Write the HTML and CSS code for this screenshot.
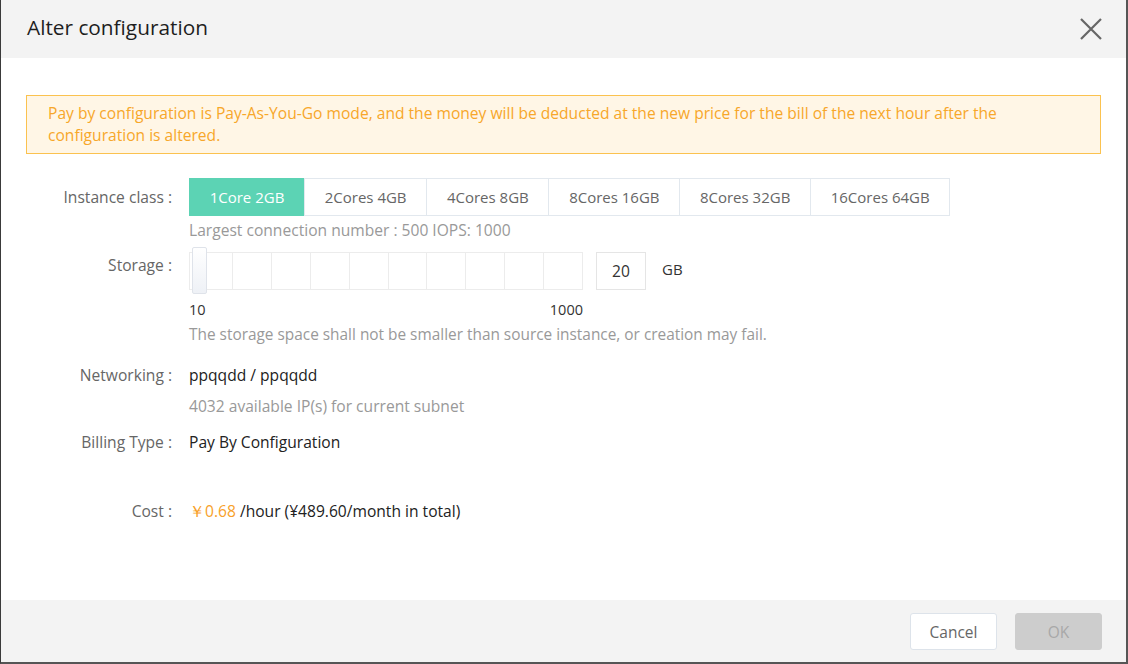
FILE: index.html
```html
<!DOCTYPE html>
<html>
<head>
<meta charset="utf-8">
<link rel="stylesheet" href="styles.css">
</head>
<body>
<div class="modal">
  <div class="modal-header">
    <div class="modal-title">Alter configuration</div>
    <button class="close-btn" aria-label="close">
      <svg width="24" height="24" viewBox="0 0 24 24"><path d="M2 2 L22 22 M22 2 L2 22" stroke="#666" stroke-width="2.2" fill="none"/></svg>
    </button>
  </div>
  <div class="modal-body">
    <div class="alert">Pay by configuration is Pay-As-You-Go mode, and the money will be deducted at the new price for the bill of the next hour after the configuration is altered.</div>

    <div class="row row-instance">
      <div class="label label-tall">Instance class :</div>
      <div class="content">
        <div class="seg">
          <span class="seg-item active">1Core 2GB</span>
          <span class="seg-item">2Cores 4GB</span>
          <span class="seg-item">4Cores 8GB</span>
          <span class="seg-item">8Cores 16GB</span>
          <span class="seg-item">8Cores 32GB</span>
          <span class="seg-item">16Cores 64GB</span>
        </div>
        <div class="hint hint-conn">Largest connection number : 500 IOPS: 1000</div>
      </div>
    </div>

    <div class="row row-storage">
      <div class="label label-storage">Storage :</div>
      <div class="content">
        <div class="slider-line">
          <div class="slider">
            <div class="track">
              <span class="cell"></span><span class="cell"></span><span class="cell"></span><span class="cell"></span><span class="cell"></span>
              <span class="cell"></span><span class="cell"></span><span class="cell"></span><span class="cell"></span><span class="cell"></span>
            </div>
            <span class="handle"></span>
          </div>
          <div class="num-input">20</div>
          <span class="unit">GB</span>
        </div>
        <div class="scale"><span>10</span><span>1000</span></div>
        <div class="hint hint-storage">The storage space shall not be smaller than source instance, or creation may fail.</div>
      </div>
    </div>

    <div class="row row-net">
      <div class="label">Networking :</div>
      <div class="content">
        <div class="value">ppqqdd / ppqqdd</div>
        <div class="hint hint-ip">4032 available IP(s) for current subnet</div>
      </div>
    </div>

    <div class="row row-billing">
      <div class="label">Billing Type :</div>
      <div class="content"><div class="value">Pay By Configuration</div></div>
    </div>

    <div class="row row-cost">
      <div class="label">Cost :</div>
      <div class="content"><div class="value"><span class="price">￥0.68</span> /hour (¥489.60/month in total)</div></div>
    </div>
  </div>
  <div class="modal-footer">
    <button class="btn btn-cancel">Cancel</button>
    <button class="btn btn-ok">OK</button>
  </div>
</div>
</body>
</html>
```

FILE: styles.css
```css
* { box-sizing: border-box; }
html, body { margin: 0; padding: 0; }
body {
  font-family: "Open Sans", "Noto Sans", "Liberation Sans", sans-serif;
  font-size: 15.6px;
  color: #333;
  background: #fff;
}
.modal {
  width: 1128px;
  height: 664px;
  display: flex;
  flex-direction: column;
  border-left: 1px solid #3a3a3a;
  border-right: 2px solid #555;
  border-bottom: 2px solid #555;
  background: #fff;
}
.modal-header {
  height: 58px;
  flex: none;
  background: #f3f3f3;
  display: flex;
  align-items: center;
  justify-content: space-between;
  padding: 0 23px 0 26px;
}
.modal-title {
  font-size: 20.8px;
  color: #1e1e1e;
  margin-top: -5px;
}
.close-btn {
  border: 0;
  background: transparent;
  padding: 0;
  width: 24px;
  height: 24px;
  margin-top: -1px;
  cursor: pointer;
}
.close-btn svg { display: block; }
.modal-body {
  flex: 1;
  padding: 37px 25px 0 25px;
}
.alert {
  background: #fff6e6;
  border: 1px solid #fbc24f;
  color: #f7a72a;
  line-height: 22px;
  padding: 6px 21px 7px 21px;
  min-height: 58px;
}
.row {
  display: grid;
  grid-template-columns: 146px 1fr;
  column-gap: 17px;
}
.label {
  text-align: right;
  color: #666;
  line-height: 20px;
}
.row-instance { margin-top: 24px; }
.label-tall { line-height: 38px; }
.seg { display: flex; }
.seg-item {
  height: 38px;
  line-height: 36px;
  font-size: 15px;
  border: 1px solid #e2e8ee;
  margin-left: -1px;
  padding: 0 19.7px;
  color: #666;
  background: #fff;
  white-space: nowrap;
}
.seg-item:first-child { margin-left: 0; }
.seg-item.active {
  background: #5cd3b4;
  border-color: #5cd3b4;
  color: #fff;
}
.hint { color: #999; line-height: 20px; }
.hint-conn { margin-top: 4px; }
.hint-storage { font-size: 15.4px; margin-top: 5px; }

.row-storage { margin-top: 12px; }
.label-storage { padding-top: 3px; }
.slider-line { display: flex; align-items: center; }
.slider {
  position: relative;
  width: 394px;
  height: 38px;
}
.track {
  display: flex;
  height: 38px;
  border: 1px solid #ececec;
  padding-left: 4px;
}
.cell {
  flex: 1;
  border-right: 1px solid #ececec;
}
.cell:last-child { border-right: 0; }
.handle {
  position: absolute;
  left: 3px;
  top: -5px;
  width: 15px;
  height: 47px;
  border: 1px solid #dfe3ea;
  border-radius: 2px;
  background: linear-gradient(to bottom, #ffffff, #eef1f6);
}
.num-input {
  width: 50px;
  height: 38px;
  border: 1px solid #e5e5e5;
  margin-left: 13px;
  text-align: center;
  line-height: 36px;
  color: #333;
}
.unit { margin-left: 16px; font-size: 15px; color: #333; margin-top: -4px; }
.scale {
  width: 394px;
  display: flex;
  justify-content: space-between;
  line-height: 20px;
  margin-top: 10px;
  color: #333;
  font-size: 14.5px;
}

.row-net { margin-top: 20px; }
.value { line-height: 20px; color: #222; }
.hint-ip { margin-top: 11px; }
.row-billing { margin-top: 16px; }
.row-cost { margin-top: 49px; }
.price { color: #f8a12a; }

.modal-footer {
  height: 62px;
  flex: none;
  background: #f3f3f3;
  display: flex;
  justify-content: flex-end;
  align-items: flex-start;
  padding: 13px 24px 0 0;
  gap: 18px;
}
.btn {
  width: 87px;
  height: 37px;
  border-radius: 3px;
  font-family: inherit;
  font-size: 15.5px;
}
.btn-cancel {
  background: #fff;
  border: 1px solid #dde3ea;
  color: #666;
}
.btn-ok {
  background: #cdcdcd;
  border: 1px solid #cdcdcd;
  color: #a8a8a8;
}
```
